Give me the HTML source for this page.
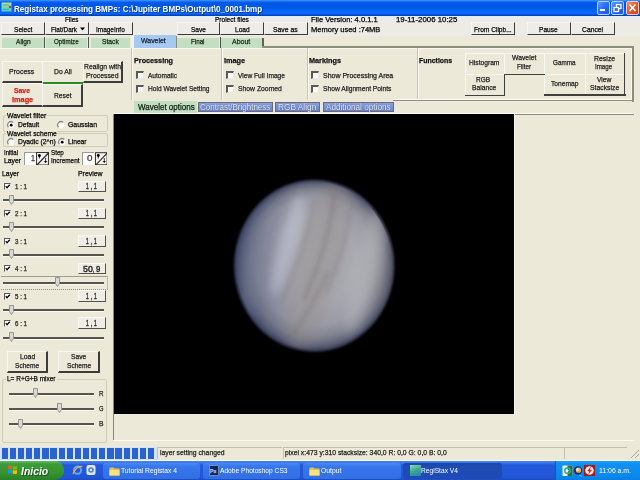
<!DOCTYPE html><html><head><meta charset="utf-8"><style>
html,body{margin:0;padding:0;width:640px;height:480px;overflow:hidden;background:#ECE9D8;font-family:"Liberation Sans", sans-serif;}
div{position:absolute;} body>svg{position:absolute;}
</style></head><body>
<div style="left:0px;top:0px;width:640px;height:16px;background:linear-gradient(#3a94ff 0px,#2a80ff 1px,#0a5ef0 2px,#0056e4 4px,#005ae8 8px,#0868fc 12px,#0a66f8 14px,#0044c8 15px,#0040b8 16px);"></div>
<svg style="position:absolute;left:1px;top:2px" width="11" height="10"><defs><linearGradient id="ig" x1="0" y1="0" x2="0" y2="1"><stop offset="0" stop-color="#a8e898"/><stop offset="1" stop-color="#48d0c8"/></linearGradient></defs><rect x="0.5" y="0.5" width="10" height="9" fill="url(#ig)"/><path d="M2 3 h6 M2 7.2 h6" stroke="#4a8a9a" stroke-width="1.1" opacity="0.7"/><circle cx="9" cy="5" r="1.2" fill="#d03050"/></svg>
<div style="left:13.50px;top:2.67px;height:12px;line-height:12px;font-size:9.6px;font-weight:bold;font-style:normal;color:#fff;white-space:nowrap;transform:scaleX(0.8420);transform-origin:0 0;;text-shadow:1px 1px 0 #0a3aa0;">Registax processing BMPs: C:\Jupiter BMPs\Output\0_0001.bmp</div>
<div style="left:597px;top:1px;width:13px;height:14px;box-sizing:border-box;border:1px solid #b8d0ff;border-radius:2px;background:linear-gradient(135deg,#5a9aff,#2a6af8 50%,#1a58e8);"></div>
<div style="left:611px;top:1px;width:13px;height:14px;box-sizing:border-box;border:1px solid #b8d0ff;border-radius:2px;background:linear-gradient(135deg,#5a9aff,#2a6af8 50%,#1a58e8);"></div>
<div style="left:626px;top:1px;width:13px;height:14px;box-sizing:border-box;border:1px solid #f0c8b8;border-radius:2px;background:linear-gradient(135deg,#f09070,#e05a30 50%,#d04820);"></div>
<div style="left:600px;top:9px;width:5px;height:2px;background:#fff;"></div>
<svg style="position:absolute;left:611px;top:1px" width="13" height="14"><rect x="5.5" y="3.5" width="4.5" height="4" fill="none" stroke="#fff" stroke-width="1.3"/><rect x="3" y="6.5" width="4.5" height="4" fill="#2a68f0" stroke="#fff" stroke-width="1.3"/></svg>
<svg style="position:absolute;left:626px;top:1px" width="13" height="14"><path d="M3.5 3.5 L9.5 10 M9.5 3.5 L3.5 10" stroke="#fff" stroke-width="1.7"/></svg>
<div style="left:0px;top:16px;width:640px;height:20px;background:#ECEBE6;"></div>
<div style="left:0px;top:16px;width:640px;height:1.5px;background:#e4ecf6;"></div>
<div style="left:64.70px;top:13.50px;height:12px;line-height:12px;font-size:7.8px;font-weight:normal;font-style:normal;color:#000;white-space:nowrap;transform:scaleX(0.8081);transform-origin:0 0;-webkit-text-stroke:0.25px #000;">Files</div>
<div style="left:215.00px;top:13.60px;height:12px;line-height:12px;font-size:7.8px;font-weight:normal;font-style:normal;color:#000;white-space:nowrap;transform:scaleX(0.8382);transform-origin:0 0;-webkit-text-stroke:0.25px #000;">Project files</div>
<div style="left:311.30px;top:13.70px;height:12px;line-height:12px;font-size:7.8px;font-weight:normal;font-style:normal;color:#000;white-space:nowrap;transform:scaleX(0.9673);transform-origin:0 0;-webkit-text-stroke:0.25px #000;">File Version: 4.0.1.1</div>
<div style="left:311.30px;top:23.60px;height:12px;line-height:12px;font-size:7.8px;font-weight:normal;font-style:normal;color:#000;white-space:nowrap;transform:scaleX(0.9645);transform-origin:0 0;-webkit-text-stroke:0.25px #000;">Memory used :74MB</div>
<div style="left:396.40px;top:13.70px;height:12px;line-height:12px;font-size:7.8px;font-weight:normal;font-style:normal;color:#000;white-space:nowrap;transform:scaleX(1.0050);transform-origin:0 0;-webkit-text-stroke:0.25px #000;">19-11-2006 10:25</div>
<div style="left:1px;top:22px;width:44px;height:13px;background:#EDECE8;box-sizing:border-box;border-top:1px solid #f4f4f0;border-left:1px solid #f4f4f0;border-right:1.6px solid #3c3c3c;border-bottom:1.6px solid #3c3c3c;"></div>
<div style="left:14.00px;top:23.50px;height:12px;line-height:12px;font-size:7.8px;font-weight:normal;font-style:normal;color:#000;white-space:nowrap;transform:scaleX(0.8439);transform-origin:0 0;-webkit-text-stroke:0.25px #000;">Select</div>
<div style="left:45px;top:22px;width:44px;height:13px;background:#EDECE8;box-sizing:border-box;border-top:1px solid #f4f4f0;border-left:1px solid #f4f4f0;border-right:1.6px solid #3c3c3c;border-bottom:1.6px solid #3c3c3c;"></div>
<div style="left:51.30px;top:23.50px;height:12px;line-height:12px;font-size:7.8px;font-weight:normal;font-style:normal;color:#000;white-space:nowrap;transform:scaleX(0.8242);transform-origin:0 0;-webkit-text-stroke:0.25px #000;">Flat/Dark</div>
<div style="left:89px;top:22px;width:44px;height:13px;background:#EDECE8;box-sizing:border-box;border-top:1px solid #f4f4f0;border-left:1px solid #f4f4f0;border-right:1.6px solid #3c3c3c;border-bottom:1.6px solid #3c3c3c;"></div>
<div style="left:96.25px;top:23.50px;height:12px;line-height:12px;font-size:7.8px;font-weight:normal;font-style:normal;color:#000;white-space:nowrap;transform:scaleX(0.8292);transform-origin:0 0;-webkit-text-stroke:0.25px #000;">ImageInfo</div>
<div style="left:177px;top:22px;width:43px;height:13px;background:#EDECE8;box-sizing:border-box;border-top:1px solid #f4f4f0;border-left:1px solid #f4f4f0;border-right:1.6px solid #3c3c3c;border-bottom:1.6px solid #3c3c3c;"></div>
<div style="left:191.20px;top:23.50px;height:12px;line-height:12px;font-size:7.8px;font-weight:normal;font-style:normal;color:#000;white-space:nowrap;transform:scaleX(0.8322);transform-origin:0 0;-webkit-text-stroke:0.25px #000;">Save</div>
<div style="left:220px;top:22px;width:44px;height:13px;background:#EDECE8;box-sizing:border-box;border-top:1px solid #f4f4f0;border-left:1px solid #f4f4f0;border-right:1.6px solid #3c3c3c;border-bottom:1.6px solid #3c3c3c;"></div>
<div style="left:234.80px;top:23.50px;height:12px;line-height:12px;font-size:7.8px;font-weight:normal;font-style:normal;color:#000;white-space:nowrap;transform:scaleX(0.8470);transform-origin:0 0;-webkit-text-stroke:0.25px #000;">Load</div>
<div style="left:264px;top:22px;width:44px;height:13px;background:#EDECE8;box-sizing:border-box;border-top:1px solid #f4f4f0;border-left:1px solid #f4f4f0;border-right:1.6px solid #3c3c3c;border-bottom:1.6px solid #3c3c3c;"></div>
<div style="left:273.30px;top:23.50px;height:12px;line-height:12px;font-size:7.8px;font-weight:normal;font-style:normal;color:#000;white-space:nowrap;transform:scaleX(0.8724);transform-origin:0 0;-webkit-text-stroke:0.25px #000;">Save as</div>
<div style="left:471px;top:22px;width:43.5px;height:13px;background:#EDECE8;box-sizing:border-box;border-top:1px solid #f4f4f0;border-left:1px solid #f4f4f0;border-right:1.6px solid #3c3c3c;border-bottom:1.6px solid #3c3c3c;"></div>
<div style="left:473.70px;top:23.50px;height:12px;line-height:12px;font-size:7.8px;font-weight:normal;font-style:normal;color:#000;white-space:nowrap;transform:scaleX(0.8443);transform-origin:0 0;-webkit-text-stroke:0.25px #000;">From Clipb...</div>
<div style="left:527px;top:22px;width:43.5px;height:13px;background:#EDECE8;box-sizing:border-box;border-top:1px solid #f4f4f0;border-left:1px solid #f4f4f0;border-right:1.6px solid #3c3c3c;border-bottom:1.6px solid #3c3c3c;"></div>
<div style="left:538.70px;top:23.50px;height:12px;line-height:12px;font-size:7.8px;font-weight:normal;font-style:normal;color:#000;white-space:nowrap;transform:scaleX(0.8457);transform-origin:0 0;-webkit-text-stroke:0.25px #000;">Pause</div>
<div style="left:570.5px;top:22px;width:44.0px;height:13px;background:#EDECE8;box-sizing:border-box;border-top:1px solid #f4f4f0;border-left:1px solid #f4f4f0;border-right:1.6px solid #3c3c3c;border-bottom:1.6px solid #3c3c3c;"></div>
<div style="left:582.00px;top:23.50px;height:12px;line-height:12px;font-size:7.8px;font-weight:normal;font-style:normal;color:#000;white-space:nowrap;transform:scaleX(0.8684);transform-origin:0 0;-webkit-text-stroke:0.25px #000;">Cancel</div>
<svg style="position:absolute;left:80px;top:27px" width="5" height="4"><path d="M0 0.5 H5 L2.5 3.5 Z" fill="#000"/></svg>
<div style="left:2px;top:37.5px;width:41.5px;height:10px;background:#C3DFC3;"></div>
<div style="left:15.50px;top:35.80px;height:12px;line-height:12px;font-size:7.8px;font-weight:normal;font-style:normal;color:#102010;white-space:nowrap;transform:scaleX(0.8470);transform-origin:0 0;-webkit-text-stroke:0.25px #102010;">Align</div>
<div style="left:46px;top:37.5px;width:40.5px;height:10px;background:#C3DFC3;"></div>
<div style="left:54.10px;top:35.80px;height:12px;line-height:12px;font-size:7.8px;font-weight:normal;font-style:normal;color:#102010;white-space:nowrap;transform:scaleX(0.8027);transform-origin:0 0;-webkit-text-stroke:0.25px #102010;">Optimize</div>
<div style="left:90.5px;top:37.5px;width:39.5px;height:10px;background:#C3DFC3;"></div>
<div style="left:101.80px;top:35.80px;height:12px;line-height:12px;font-size:7.8px;font-weight:normal;font-style:normal;color:#102010;white-space:nowrap;transform:scaleX(0.8649);transform-origin:0 0;-webkit-text-stroke:0.25px #102010;">Stack</div>
<div style="left:177px;top:37.5px;width:41.5px;height:10px;background:#C3DFC3;"></div>
<div style="left:191.00px;top:35.80px;height:12px;line-height:12px;font-size:7.8px;font-weight:normal;font-style:normal;color:#102010;white-space:nowrap;transform:scaleX(0.7976);transform-origin:0 0;-webkit-text-stroke:0.25px #102010;">Final</div>
<div style="left:221px;top:37.5px;width:41px;height:10px;background:#C3DFC3;"></div>
<div style="left:231.90px;top:35.80px;height:12px;line-height:12px;font-size:7.8px;font-weight:normal;font-style:normal;color:#102010;white-space:nowrap;transform:scaleX(0.8972);transform-origin:0 0;-webkit-text-stroke:0.25px #102010;">About</div>
<div style="left:134px;top:35px;width:42px;height:12.5px;background:#A6C9F2;"></div>
<div style="left:141.20px;top:34.60px;height:12px;line-height:12px;font-size:7.8px;font-weight:normal;font-style:normal;color:#102030;white-space:nowrap;transform:scaleX(0.8894);transform-origin:0 0;-webkit-text-stroke:0.25px #102030;">Wavelet</div>
<div style="left:44px;top:37px;width:1.2px;height:11px;background:#505050;"></div>
<div style="left:87.5px;top:37px;width:1.2px;height:11px;background:#505050;"></div>
<div style="left:219.5px;top:37px;width:1.2px;height:11px;background:#505050;"></div>
<div style="left:176px;top:36px;width:1px;height:12px;background:#8a8a80;"></div>
<div style="left:130.5px;top:36px;width:3px;height:12px;background:#f2f2ea;"></div>
<div style="left:262px;top:37.5px;width:1.5px;height:10px;background:#606060;"></div>
<div style="left:262px;top:46.2px;width:371.5px;height:1.4px;background:#908e80;"></div>
<div style="left:0px;top:47.5px;width:633px;height:1px;background:#f8f7f0;"></div>
<div style="left:131px;top:48px;width:1px;height:52px;background:#c8c4b0;"></div>
<div style="left:132px;top:48px;width:1px;height:52px;background:#faf9f2;"></div>
<div style="left:220.5px;top:48px;width:1px;height:52px;background:#c8c4b0;"></div>
<div style="left:221.5px;top:48px;width:1px;height:52px;background:#faf9f2;"></div>
<div style="left:307px;top:48px;width:1px;height:52px;background:#c8c4b0;"></div>
<div style="left:308px;top:48px;width:1px;height:52px;background:#faf9f2;"></div>
<div style="left:417px;top:48px;width:1px;height:52px;background:#c8c4b0;"></div>
<div style="left:418px;top:48px;width:1px;height:52px;background:#faf9f2;"></div>
<div style="left:393px;top:100.3px;width:240.5px;height:1.2px;background:#908e80;"></div>
<div style="left:393px;top:98.8px;width:239px;height:1.2px;background:#fbfaf4;"></div>
<div style="left:632.4px;top:47px;width:1.3px;height:54.5px;background:#908e80;"></div>
<div style="left:631.2px;top:49px;width:1.2px;height:50px;background:#fbfaf4;"></div>
<div style="left:133.90px;top:55.07px;height:12px;line-height:12px;font-size:7.6px;font-weight:bold;font-style:normal;color:#111;white-space:nowrap;transform:scaleX(0.9521);transform-origin:0 0;-webkit-text-stroke:0.25px #111;">Processing</div>
<div style="left:223.90px;top:55.07px;height:12px;line-height:12px;font-size:7.6px;font-weight:bold;font-style:normal;color:#111;white-space:nowrap;transform:scaleX(0.9607);transform-origin:0 0;-webkit-text-stroke:0.25px #111;">Image</div>
<div style="left:308.90px;top:55.07px;height:12px;line-height:12px;font-size:7.6px;font-weight:bold;font-style:normal;color:#111;white-space:nowrap;transform:scaleX(0.9591);transform-origin:0 0;-webkit-text-stroke:0.25px #111;">Markings</div>
<div style="left:419.00px;top:55.12px;height:12px;line-height:12px;font-size:7.6px;font-weight:bold;font-style:normal;color:#111;white-space:nowrap;transform:scaleX(0.9139);transform-origin:0 0;-webkit-text-stroke:0.25px #111;">Functions</div>
<div style="left:136.3px;top:71.0px;width:8px;height:8px;box-sizing:border-box;background:#fbfbf8;border-top:2px solid #5a5a5a;border-left:2px solid #5a5a5a;border-right:1px solid #e8e8e0;border-bottom:1px solid #e8e8e0;"></div>
<div style="left:148.00px;top:69.50px;height:12px;line-height:12px;font-size:7.8px;font-weight:normal;font-style:normal;color:#1a1a1a;white-space:nowrap;transform:scaleX(0.8393);transform-origin:0 0;-webkit-text-stroke:0.25px #1a1a1a;">Automatic</div>
<div style="left:136.3px;top:84.6px;width:8px;height:8px;box-sizing:border-box;background:#fbfbf8;border-top:2px solid #5a5a5a;border-left:2px solid #5a5a5a;border-right:1px solid #e8e8e0;border-bottom:1px solid #e8e8e0;"></div>
<div style="left:148.00px;top:83.10px;height:12px;line-height:12px;font-size:7.8px;font-weight:normal;font-style:normal;color:#1a1a1a;white-space:nowrap;transform:scaleX(0.8478);transform-origin:0 0;-webkit-text-stroke:0.25px #1a1a1a;">Hold Wavelet Setting</div>
<div style="left:226.3px;top:71.0px;width:8px;height:8px;box-sizing:border-box;background:#fbfbf8;border-top:2px solid #5a5a5a;border-left:2px solid #5a5a5a;border-right:1px solid #e8e8e0;border-bottom:1px solid #e8e8e0;"></div>
<div style="left:238.00px;top:69.50px;height:12px;line-height:12px;font-size:7.8px;font-weight:normal;font-style:normal;color:#1a1a1a;white-space:nowrap;transform:scaleX(0.8493);transform-origin:0 0;-webkit-text-stroke:0.25px #1a1a1a;">View Full Image</div>
<div style="left:226.3px;top:84.6px;width:8px;height:8px;box-sizing:border-box;background:#fbfbf8;border-top:2px solid #5a5a5a;border-left:2px solid #5a5a5a;border-right:1px solid #e8e8e0;border-bottom:1px solid #e8e8e0;"></div>
<div style="left:238.00px;top:83.10px;height:12px;line-height:12px;font-size:7.8px;font-weight:normal;font-style:normal;color:#1a1a1a;white-space:nowrap;transform:scaleX(0.8726);transform-origin:0 0;-webkit-text-stroke:0.25px #1a1a1a;">Show Zoomed</div>
<div style="left:311.3px;top:71.0px;width:8px;height:8px;box-sizing:border-box;background:#fbfbf8;border-top:2px solid #5a5a5a;border-left:2px solid #5a5a5a;border-right:1px solid #e8e8e0;border-bottom:1px solid #e8e8e0;"></div>
<div style="left:323.00px;top:69.50px;height:12px;line-height:12px;font-size:7.8px;font-weight:normal;font-style:normal;color:#1a1a1a;white-space:nowrap;transform:scaleX(0.8955);transform-origin:0 0;-webkit-text-stroke:0.25px #1a1a1a;">Show Processing Area</div>
<div style="left:311.3px;top:84.6px;width:8px;height:8px;box-sizing:border-box;background:#fbfbf8;border-top:2px solid #5a5a5a;border-left:2px solid #5a5a5a;border-right:1px solid #e8e8e0;border-bottom:1px solid #e8e8e0;"></div>
<div style="left:323.00px;top:83.10px;height:12px;line-height:12px;font-size:7.8px;font-weight:normal;font-style:normal;color:#1a1a1a;white-space:nowrap;transform:scaleX(0.8585);transform-origin:0 0;-webkit-text-stroke:0.25px #1a1a1a;">Show Alignment Points</div>
<div style="left:464.5px;top:53px;width:161px;height:43px;background:#ECE9D8;"></div>
<div style="left:505px;top:75px;width:39px;height:21px;background:#ECE9D8;"></div>
<div style="left:464.5px;top:53px;width:160px;height:1px;background:#f8f8f2;"></div>
<div style="left:464.5px;top:53px;width:1px;height:43px;background:#f8f8f2;"></div>
<div style="left:504px;top:53px;width:1px;height:21px;background:#f8f8f2;"></div>
<div style="left:544px;top:53px;width:1px;height:43px;background:#f8f8f2;"></div>
<div style="left:585px;top:53px;width:1px;height:43px;background:#f8f8f2;"></div>
<div style="left:464.5px;top:73.5px;width:40px;height:1px;background:#f8f8f2;"></div>
<div style="left:544px;top:73.5px;width:80px;height:1px;background:#f8f8f2;"></div>
<div style="left:504px;top:73.5px;width:40.5px;height:1.6px;background:#404040;"></div>
<div style="left:503.5px;top:73.5px;width:1.6px;height:22.7px;background:#404040;"></div>
<div style="left:464.5px;top:94.6px;width:40.6px;height:1.6px;background:#404040;"></div>
<div style="left:544px;top:94.2px;width:81.5px;height:1.6px;background:#404040;"></div>
<div style="left:623.9px;top:53px;width:1.6px;height:42.8px;background:#404040;"></div>
<div style="left:468.60px;top:56.90px;height:12px;line-height:12px;font-size:7.8px;font-weight:normal;font-style:normal;color:#1a1a1a;white-space:nowrap;transform:scaleX(0.8556);transform-origin:0 0;-webkit-text-stroke:0.25px #1a1a1a;">Histogram</div>
<div style="left:511.90px;top:52.30px;height:12px;line-height:12px;font-size:7.8px;font-weight:normal;font-style:normal;color:#1a1a1a;white-space:nowrap;transform:scaleX(0.8732);transform-origin:0 0;-webkit-text-stroke:0.25px #1a1a1a;">Wavelet</div>
<div style="left:516.90px;top:61.05px;height:12px;line-height:12px;font-size:7.8px;font-weight:normal;font-style:normal;color:#1a1a1a;white-space:nowrap;transform:scaleX(0.8143);transform-origin:0 0;-webkit-text-stroke:0.25px #1a1a1a;">Filter</div>
<div style="left:552.50px;top:56.55px;height:12px;line-height:12px;font-size:7.8px;font-weight:normal;font-style:normal;color:#1a1a1a;white-space:nowrap;transform:scaleX(0.8103);transform-origin:0 0;-webkit-text-stroke:0.25px #1a1a1a;">Gamma</div>
<div style="left:593.50px;top:52.50px;height:12px;line-height:12px;font-size:7.8px;font-weight:normal;font-style:normal;color:#1a1a1a;white-space:nowrap;transform:scaleX(0.8897);transform-origin:0 0;-webkit-text-stroke:0.25px #1a1a1a;">Resize</div>
<div style="left:595.20px;top:61.10px;height:12px;line-height:12px;font-size:7.8px;font-weight:normal;font-style:normal;color:#1a1a1a;white-space:nowrap;transform:scaleX(0.7932);transform-origin:0 0;-webkit-text-stroke:0.25px #1a1a1a;">Image</div>
<div style="left:476.40px;top:73.80px;height:12px;line-height:12px;font-size:7.8px;font-weight:normal;font-style:normal;color:#1a1a1a;white-space:nowrap;transform:scaleX(0.8350);transform-origin:0 0;-webkit-text-stroke:0.25px #1a1a1a;">RGB</div>
<div style="left:471.70px;top:82.30px;height:12px;line-height:12px;font-size:7.8px;font-weight:normal;font-style:normal;color:#1a1a1a;white-space:nowrap;transform:scaleX(0.8618);transform-origin:0 0;-webkit-text-stroke:0.25px #1a1a1a;">Balance</div>
<div style="left:550.60px;top:78.20px;height:12px;line-height:12px;font-size:7.8px;font-weight:normal;font-style:normal;color:#1a1a1a;white-space:nowrap;transform:scaleX(0.8537);transform-origin:0 0;-webkit-text-stroke:0.25px #1a1a1a;">Tonemap</div>
<div style="left:596.90px;top:73.70px;height:12px;line-height:12px;font-size:7.8px;font-weight:normal;font-style:normal;color:#1a1a1a;white-space:nowrap;transform:scaleX(0.8527);transform-origin:0 0;-webkit-text-stroke:0.25px #1a1a1a;">View</div>
<div style="left:589.50px;top:82.30px;height:12px;line-height:12px;font-size:7.8px;font-weight:normal;font-style:normal;color:#1a1a1a;white-space:nowrap;transform:scaleX(0.8747);transform-origin:0 0;-webkit-text-stroke:0.25px #1a1a1a;">Stacksize</div>
<div style="left:2px;top:61px;width:40.5px;height:22px;background:#ECE9D8;box-sizing:border-box;border-top:1px solid #f8f8f2;border-left:1px solid #f8f8f2;border-right:0px solid #3c3c3c;border-bottom:2px solid #3c3c3c;"></div>
<div style="left:9.40px;top:65.70px;height:12px;line-height:12px;font-size:7.8px;font-weight:normal;font-style:normal;color:#1a1a1a;white-space:nowrap;transform:scaleX(0.8985);transform-origin:0 0;-webkit-text-stroke:0.25px #1a1a1a;">Process</div>
<div style="left:42px;top:61px;width:41px;height:22.5px;background:#ECE9D8;box-sizing:border-box;border-top:1px solid #f8f8f2;border-left:1px solid #f8f8f2;border-right:0px solid #2a8a2a;border-bottom:2.5px solid #2a8a2a;"></div>
<div style="left:53.50px;top:65.70px;height:12px;line-height:12px;font-size:7.8px;font-weight:normal;font-style:normal;color:#1a1a1a;white-space:nowrap;transform:scaleX(0.8743);transform-origin:0 0;-webkit-text-stroke:0.25px #1a1a1a;">Do All</div>
<div style="left:82.5px;top:61px;width:40.5px;height:22px;background:#ECE9D8;box-sizing:border-box;border-top:1px solid #f8f8f2;border-left:1px solid #f8f8f2;border-right:2px solid #3c3c3c;border-bottom:2px solid #3c3c3c;"></div>
<div style="left:84.00px;top:61.30px;height:12px;line-height:12px;font-size:7.8px;font-weight:normal;font-style:normal;color:#1a1a1a;white-space:nowrap;transform:scaleX(0.8712);transform-origin:0 0;-webkit-text-stroke:0.25px #1a1a1a;">Realign with</div>
<div style="left:86.00px;top:69.80px;height:12px;line-height:12px;font-size:7.8px;font-weight:normal;font-style:normal;color:#1a1a1a;white-space:nowrap;transform:scaleX(0.8818);transform-origin:0 0;-webkit-text-stroke:0.25px #1a1a1a;">Processed</div>
<div style="left:2px;top:83px;width:40.5px;height:23.799999999999997px;background:#ECE9D8;box-sizing:border-box;border-top:1px solid #f8f8f2;border-left:1px solid #f8f8f2;border-right:0px solid #3c3c3c;border-bottom:2px solid #3c3c3c;"></div>
<div style="left:14.00px;top:85.37px;height:12px;line-height:12px;font-size:7.6px;font-weight:bold;font-style:normal;color:#e01818;white-space:nowrap;transform:scaleX(0.9016);transform-origin:0 0;-webkit-text-stroke:0.25px #e01818;">Save</div>
<div style="left:11.60px;top:94.17px;height:12px;line-height:12px;font-size:7.6px;font-weight:bold;font-style:normal;color:#e01818;white-space:nowrap;transform:scaleX(0.9652);transform-origin:0 0;-webkit-text-stroke:0.25px #e01818;">Image</div>
<div style="left:42px;top:83.5px;width:41px;height:23.299999999999997px;background:#ECE9D8;box-sizing:border-box;border-top:1px solid #f8f8f2;border-left:1px solid #f8f8f2;border-right:2px solid #3c3c3c;border-bottom:2px solid #3c3c3c;"></div>
<div style="left:53.50px;top:89.50px;height:12px;line-height:12px;font-size:7.8px;font-weight:normal;font-style:normal;color:#1a1a1a;white-space:nowrap;transform:scaleX(0.8596);transform-origin:0 0;-webkit-text-stroke:0.25px #1a1a1a;">Reset</div>
<div style="left:134px;top:101px;width:63px;height:12.5px;background:#C4E0C4;"></div>
<div style="left:137.70px;top:101.15px;height:12px;line-height:12px;font-size:8.8px;font-weight:normal;font-style:normal;color:#101810;white-space:nowrap;transform:scaleX(0.9101);transform-origin:0 0;-webkit-text-stroke:0.25px #101810;">Wavelet options</div>
<div style="left:198px;top:101.8px;width:74.5px;height:10.5px;box-sizing:border-box;border:1px solid #6a6a70;background:linear-gradient(#8aa0e0,#6a84d0);"></div>
<div style="left:200.20px;top:100.95px;height:12px;line-height:12px;font-size:8.8px;font-weight:normal;font-style:normal;color:#eef2fa;white-space:nowrap;transform:scaleX(0.9099);transform-origin:0 0;;text-shadow:0 0 1px #203070;">Contrast/Brightness</div>
<div style="left:274.5px;top:101.8px;width:45.5px;height:10.5px;box-sizing:border-box;border:1px solid #6a6a70;background:linear-gradient(#8aa0e0,#6a84d0);"></div>
<div style="left:277.50px;top:100.95px;height:12px;line-height:12px;font-size:8.8px;font-weight:normal;font-style:normal;color:#eef2fa;white-space:nowrap;transform:scaleX(0.9431);transform-origin:0 0;;text-shadow:0 0 1px #203070;">RGB Align</div>
<div style="left:323px;top:101.8px;width:70.5px;height:10.5px;box-sizing:border-box;border:1px solid #6a6a70;background:linear-gradient(#8aa0e0,#6a84d0);"></div>
<div style="left:325.60px;top:100.95px;height:12px;line-height:12px;font-size:8.8px;font-weight:normal;font-style:normal;color:#eef2fa;white-space:nowrap;transform:scaleX(0.9298);transform-origin:0 0;;text-shadow:0 0 1px #203070;">Additional options</div>
<div style="left:113px;top:112.8px;width:520px;height:1.2px;background:#fbfaf4;"></div>
<div style="left:514px;top:114px;width:119.5px;height:1px;background:#8a887a;"></div>
<div style="left:113px;top:114px;width:401px;height:300px;background:#000;"></div>
<svg style="position:absolute;left:113px;top:114px" width="401" height="300" viewBox="113 114 401 300">
<defs>
<radialGradient id="pg" cx="314.25" cy="265.75" fx="316" fy="250" r="86.25" gradientUnits="userSpaceOnUse" gradientTransform="translate(314.25 265.75) scale(0.9304 1) translate(-314.25 -265.75)">
<stop offset="0" stop-color="#acacb2"/>
<stop offset="0.5" stop-color="#a8a8b0"/>
<stop offset="0.74" stop-color="#9a9ba6"/>
<stop offset="0.86" stop-color="#80828f"/>
<stop offset="0.94" stop-color="#5e6278"/>
<stop offset="0.985" stop-color="#3a3e56"/>
<stop offset="1" stop-color="#202434"/>
</radialGradient>
<linearGradient id="side" x1="0" y1="0" x2="1" y2="0">
<stop offset="0" stop-color="#34406a" stop-opacity="0.5"/>
<stop offset="0.4" stop-color="#34406a" stop-opacity="0"/>
<stop offset="0.75" stop-color="#706a60" stop-opacity="0"/>
<stop offset="1" stop-color="#706a60" stop-opacity="0.2"/>
</linearGradient>
<filter id="bl" x="-50%" y="-50%" width="200%" height="200%"><feGaussianBlur stdDeviation="6"/></filter>
<filter id="bl4" x="-50%" y="-50%" width="200%" height="200%"><feGaussianBlur stdDeviation="4.5"/></filter>
<filter id="bl3" x="-50%" y="-50%" width="200%" height="200%"><feGaussianBlur stdDeviation="2.2"/></filter>
<filter id="bl2" x="-20%" y="-20%" width="140%" height="140%"><feGaussianBlur stdDeviation="1.3"/></filter>
<clipPath id="pc"><ellipse cx="314.25" cy="265.75" rx="78" ry="84"/></clipPath>
</defs>
<g filter="url(#bl2)">
<ellipse cx="314.25" cy="265.75" rx="80.25" ry="86.25" fill="url(#pg)"/>
<ellipse cx="314.25" cy="265.75" rx="80.25" ry="86.25" fill="url(#side)"/>
</g>
<g clip-path="url(#pc)">
<g filter="url(#bl)">
<ellipse cx="318" cy="262" rx="22" ry="92" fill="#8c8682" opacity="0.36" transform="rotate(15 318 262)"/>
<ellipse cx="254" cy="272" rx="12" ry="70" fill="#80849c" opacity="0.25" transform="rotate(15 254 272)"/>
<ellipse cx="368" cy="262" rx="12" ry="75" fill="#bcbcc0" opacity="0.5" transform="rotate(15 368 262)"/>
</g>
<g filter="url(#bl4)">
<ellipse cx="287" cy="246" rx="8" ry="52" fill="#c6cade" opacity="0.5" transform="rotate(16 287 246)"/>
</g>
<g filter="url(#bl3)" opacity="0.3">
<path d="M334 192 C332 225 322 258 304 300" stroke="#665e5e" stroke-width="3.5" fill="none"/>
<path d="M314 200 C310 232 298 262 282 300" stroke="#7a7272" stroke-width="3" fill="none"/>
<path d="M352 200 C348 232 340 262 326 292" stroke="#7a7474" stroke-width="3" fill="none"/>
<path d="M328 272 C318 295 304 318 290 340" stroke="#766c6c" stroke-width="4" fill="none"/>
<path d="M262 220 C258 245 252 270 246 300" stroke="#707488" stroke-width="3" fill="none"/>
</g>
</g>
</svg>
<div style="left:112.5px;top:114px;width:1px;height:326px;background:#8a8778;"></div>
<div style="left:113px;top:440px;width:521px;height:1.2px;background:#fbfaf4;"></div>
<div style="left:514px;top:114px;width:1px;height:300.5px;background:#fbfaf4;"></div>
<div style="left:2.5px;top:115px;width:105.5px;height:17px;box-sizing:border-box;border:1px solid #d0ccb8;border-radius:2px;"></div>
<div style="left:6px;top:112px;width:41px;height:6px;background:#ECE9D8;"></div>
<div style="left:6.70px;top:109.70px;height:12px;line-height:12px;font-size:7.8px;font-weight:normal;font-style:normal;color:#000;white-space:nowrap;transform:scaleX(0.8778);transform-origin:0 0;-webkit-text-stroke:0.25px #000;">Wavelet filter</div>
<svg style="position:absolute;left:6.199999999999999px;top:119.6px" width="10" height="10"><circle cx="5" cy="5" r="3.4" fill="#fafaf6"/><path d="M 2.45 7.24 A 3.4 3.4 0 0 1 7.24 2.45" stroke="#8a8a8a" stroke-width="1.3" fill="none"/><circle cx="5.2" cy="5.2" r="1.4" fill="#000"/></svg>
<div style="left:18.20px;top:118.80px;height:12px;line-height:12px;font-size:7.8px;font-weight:normal;font-style:normal;color:#000;white-space:nowrap;transform:scaleX(0.8534);transform-origin:0 0;-webkit-text-stroke:0.25px #000;">Default</div>
<svg style="position:absolute;left:56.2px;top:119.6px" width="10" height="10"><circle cx="5" cy="5" r="3.4" fill="#fafaf6"/><path d="M 2.45 7.24 A 3.4 3.4 0 0 1 7.24 2.45" stroke="#8a8a8a" stroke-width="1.3" fill="none"/></svg>
<div style="left:68.00px;top:119.05px;height:12px;line-height:12px;font-size:7.8px;font-weight:normal;font-style:normal;color:#000;white-space:nowrap;transform:scaleX(0.8800);transform-origin:0 0;-webkit-text-stroke:0.25px #000;">Gaussian</div>
<div style="left:2.5px;top:133.2px;width:105.5px;height:14px;box-sizing:border-box;border:1px solid #d0ccb8;border-radius:2px;"></div>
<div style="left:6px;top:131px;width:51px;height:4px;background:#ECE9D8;"></div>
<div style="left:6.70px;top:127.90px;height:12px;line-height:12px;font-size:7.8px;font-weight:normal;font-style:normal;color:#000;white-space:nowrap;transform:scaleX(0.8698);transform-origin:0 0;-webkit-text-stroke:0.25px #000;">Wavelet scheme</div>
<svg style="position:absolute;left:6.199999999999999px;top:137.3px" width="10" height="10"><circle cx="5" cy="5" r="3.4" fill="#fafaf6"/><path d="M 2.45 7.24 A 3.4 3.4 0 0 1 7.24 2.45" stroke="#8a8a8a" stroke-width="1.3" fill="none"/></svg>
<div style="left:18.20px;top:136.00px;height:12px;line-height:12px;font-size:7.8px;font-weight:normal;font-style:normal;color:#000;white-space:nowrap;transform:scaleX(0.8685);transform-origin:0 0;-webkit-text-stroke:0.25px #000;">Dyadic (2^n)</div>
<svg style="position:absolute;left:56.5px;top:137.3px" width="10" height="10"><circle cx="5" cy="5" r="3.4" fill="#fafaf6"/><path d="M 2.45 7.24 A 3.4 3.4 0 0 1 7.24 2.45" stroke="#8a8a8a" stroke-width="1.3" fill="none"/><circle cx="5.2" cy="5.2" r="1.4" fill="#000"/></svg>
<div style="left:67.50px;top:135.90px;height:12px;line-height:12px;font-size:7.8px;font-weight:normal;font-style:normal;color:#000;white-space:nowrap;transform:scaleX(0.8532);transform-origin:0 0;-webkit-text-stroke:0.25px #000;">Linear</div>
<div style="left:3.50px;top:146.50px;height:12px;line-height:12px;font-size:7.8px;font-weight:normal;font-style:normal;color:#000;white-space:nowrap;transform:scaleX(0.7687);transform-origin:0 0;-webkit-text-stroke:0.25px #000;">Initial</div>
<div style="left:3.50px;top:155.20px;height:12px;line-height:12px;font-size:7.8px;font-weight:normal;font-style:normal;color:#000;white-space:nowrap;transform:scaleX(0.8769);transform-origin:0 0;-webkit-text-stroke:0.25px #000;">Layer</div>
<div style="left:51.10px;top:146.80px;height:12px;line-height:12px;font-size:7.8px;font-weight:normal;font-style:normal;color:#000;white-space:nowrap;transform:scaleX(0.7986);transform-origin:0 0;-webkit-text-stroke:0.25px #000;">Step</div>
<div style="left:51.10px;top:155.20px;height:12px;line-height:12px;font-size:7.8px;font-weight:normal;font-style:normal;color:#000;white-space:nowrap;transform:scaleX(0.8220);transform-origin:0 0;-webkit-text-stroke:0.25px #000;">Increment</div>
<div style="left:23.6px;top:151.6px;width:12.399999999999999px;height:13.5px;box-sizing:border-box;background:#fff;border-top:1px solid #9a9a9a;border-left:1px solid #9a9a9a;"></div>
<div style="left:31.00px;top:152.24px;height:12px;line-height:12px;font-size:9.4px;font-weight:normal;font-style:normal;color:#333;white-space:nowrap;transform:scaleX(0.7667);transform-origin:0 0;-webkit-text-stroke:0.25px #333;">1</div>
<svg style="position:absolute;left:36px;top:151.6px" width="13" height="13.5" viewBox="0 0 13 13.5"><rect x="0.5" y="0.5" width="12" height="12.5" fill="#f4f3ee" stroke="#3a3a3a" stroke-width="1.1"/><path d="M1 13 L12.5 1" stroke="#202020" stroke-width="1.1"/><circle cx="3.4" cy="3.4" r="1.5" fill="#000"/><path d="M3.4 3.5 v3" stroke="#000" stroke-width="0.8"/><path d="M8 9 h3.2 l-1.6 2.2 z" fill="#000"/><path d="M9.6 6 v3" stroke="#000" stroke-width="0.8"/></svg>
<div style="left:82.3px;top:151.6px;width:12.200000000000003px;height:13.5px;box-sizing:border-box;background:#fff;border-top:1px solid #9a9a9a;border-left:1px solid #9a9a9a;"></div>
<div style="left:86.50px;top:152.24px;height:12px;line-height:12px;font-size:9.4px;font-weight:normal;font-style:normal;color:#333;white-space:nowrap;transform:scaleX(1.0542);transform-origin:0 0;-webkit-text-stroke:0.25px #333;">0</div>
<svg style="position:absolute;left:94.5px;top:151.6px" width="12.599999999999994" height="13.5" viewBox="0 0 13 13.5"><rect x="0.5" y="0.5" width="12" height="12.5" fill="#f4f3ee" stroke="#3a3a3a" stroke-width="1.1"/><path d="M1 13 L12.5 1" stroke="#202020" stroke-width="1.1"/><circle cx="3.4" cy="3.4" r="1.5" fill="#000"/><path d="M3.4 3.5 v3" stroke="#000" stroke-width="0.8"/><path d="M8 9 h3.2 l-1.6 2.2 z" fill="#000"/><path d="M9.6 6 v3" stroke="#000" stroke-width="0.8"/></svg>
<div style="left:2.10px;top:167.80px;height:12px;line-height:12px;font-size:7.8px;font-weight:normal;font-style:normal;color:#000;white-space:nowrap;transform:scaleX(0.8795);transform-origin:0 0;-webkit-text-stroke:0.25px #000;">Layer</div>
<div style="left:77.90px;top:167.80px;height:12px;line-height:12px;font-size:7.8px;font-weight:normal;font-style:normal;color:#000;white-space:nowrap;transform:scaleX(0.8823);transform-origin:0 0;-webkit-text-stroke:0.25px #000;">Preview</div>
<div style="left:4.2px;top:183.2px;width:7px;height:7px;box-sizing:border-box;background:#fbfbf8;border-top:1.6px solid #5a5a5a;border-left:1.6px solid #5a5a5a;border-right:1px solid #e8e8e0;border-bottom:1px solid #e8e8e0;"></div>
<svg style="position:absolute;left:4.2px;top:183.2px" width="7" height="7" viewBox="0 0 8 8"><path d="M2 3.6 L3.5 5.4 L6.6 2" stroke="#000" stroke-width="1.4" fill="none"/></svg>
<div style="left:15.00px;top:181.00px;height:12px;line-height:12px;font-size:7.8px;font-weight:normal;font-style:normal;color:#1a1a1a;white-space:nowrap;transform:scaleX(0.7910);transform-origin:0 0;-webkit-text-stroke:0.25px #1a1a1a;">1 : 1</div>
<div style="left:77.5px;top:180.5px;width:28.299999999999997px;height:11.599999999999994px;background:#EEEDE6;box-sizing:border-box;border-top:1px solid #f8f8f4;border-left:1px solid #f8f8f4;border-right:1.4px solid #505050;border-bottom:1.4px solid #505050;"></div>
<div style="left:86.30px;top:180.17px;height:12px;line-height:12px;font-size:9.6px;font-weight:normal;font-style:normal;color:#2a2a2a;white-space:nowrap;transform:scaleX(0.5068);transform-origin:0 0;-webkit-text-stroke:0.25px #2a2a2a;-webkit-text-stroke:0.45px #2a2a2a;">1</div>
<div style="left:90.80px;top:180.17px;height:12px;line-height:12px;font-size:9.6px;font-weight:normal;font-style:normal;color:#2a2a2a;white-space:nowrap;transform:scaleX(0.5208);transform-origin:0 0;-webkit-text-stroke:0.25px #2a2a2a;-webkit-text-stroke:0.45px #2a2a2a;">,</div>
<div style="left:93.80px;top:180.17px;height:12px;line-height:12px;font-size:9.6px;font-weight:normal;font-style:normal;color:#2a2a2a;white-space:nowrap;transform:scaleX(0.5068);transform-origin:0 0;-webkit-text-stroke:0.25px #2a2a2a;-webkit-text-stroke:0.45px #2a2a2a;">1</div>
<div style="left:3px;top:199px;width:101px;height:2px;background:#56544c;"></div>
<div style="left:3px;top:201px;width:101px;height:1px;background:#faf9f2;"></div>
<svg style="position:absolute;left:9.0px;top:194.5px" width="5" height="10" viewBox="0 0 5 10"><path d="M0.5 0.5 H4.5 V6.5 L2.5 9.5 L0.5 6.5 Z" fill="#d8d8d4" stroke="#8c8c88" stroke-width="0.9"/></svg>
<div style="left:4.2px;top:210.2px;width:7px;height:7px;box-sizing:border-box;background:#fbfbf8;border-top:1.6px solid #5a5a5a;border-left:1.6px solid #5a5a5a;border-right:1px solid #e8e8e0;border-bottom:1px solid #e8e8e0;"></div>
<svg style="position:absolute;left:4.2px;top:210.2px" width="7" height="7" viewBox="0 0 8 8"><path d="M2 3.6 L3.5 5.4 L6.6 2" stroke="#000" stroke-width="1.4" fill="none"/></svg>
<div style="left:15.00px;top:208.00px;height:12px;line-height:12px;font-size:7.8px;font-weight:normal;font-style:normal;color:#1a1a1a;white-space:nowrap;transform:scaleX(0.7910);transform-origin:0 0;-webkit-text-stroke:0.25px #1a1a1a;">2 : 1</div>
<div style="left:77.5px;top:207.5px;width:28.299999999999997px;height:11.599999999999994px;background:#EEEDE6;box-sizing:border-box;border-top:1px solid #f8f8f4;border-left:1px solid #f8f8f4;border-right:1.4px solid #505050;border-bottom:1.4px solid #505050;"></div>
<div style="left:86.30px;top:207.17px;height:12px;line-height:12px;font-size:9.6px;font-weight:normal;font-style:normal;color:#2a2a2a;white-space:nowrap;transform:scaleX(0.5068);transform-origin:0 0;-webkit-text-stroke:0.25px #2a2a2a;-webkit-text-stroke:0.45px #2a2a2a;">1</div>
<div style="left:90.80px;top:207.17px;height:12px;line-height:12px;font-size:9.6px;font-weight:normal;font-style:normal;color:#2a2a2a;white-space:nowrap;transform:scaleX(0.5208);transform-origin:0 0;-webkit-text-stroke:0.25px #2a2a2a;-webkit-text-stroke:0.45px #2a2a2a;">,</div>
<div style="left:93.80px;top:207.17px;height:12px;line-height:12px;font-size:9.6px;font-weight:normal;font-style:normal;color:#2a2a2a;white-space:nowrap;transform:scaleX(0.5068);transform-origin:0 0;-webkit-text-stroke:0.25px #2a2a2a;-webkit-text-stroke:0.45px #2a2a2a;">1</div>
<div style="left:3px;top:226px;width:101px;height:2px;background:#56544c;"></div>
<div style="left:3px;top:228px;width:101px;height:1px;background:#faf9f2;"></div>
<svg style="position:absolute;left:9.0px;top:221.8px" width="5" height="10" viewBox="0 0 5 10"><path d="M0.5 0.5 H4.5 V6.5 L2.5 9.5 L0.5 6.5 Z" fill="#d8d8d4" stroke="#8c8c88" stroke-width="0.9"/></svg>
<div style="left:4.2px;top:238.0px;width:7px;height:7px;box-sizing:border-box;background:#fbfbf8;border-top:1.6px solid #5a5a5a;border-left:1.6px solid #5a5a5a;border-right:1px solid #e8e8e0;border-bottom:1px solid #e8e8e0;"></div>
<svg style="position:absolute;left:4.2px;top:238.0px" width="7" height="7" viewBox="0 0 8 8"><path d="M2 3.6 L3.5 5.4 L6.6 2" stroke="#000" stroke-width="1.4" fill="none"/></svg>
<div style="left:15.00px;top:235.80px;height:12px;line-height:12px;font-size:7.8px;font-weight:normal;font-style:normal;color:#1a1a1a;white-space:nowrap;transform:scaleX(0.7910);transform-origin:0 0;-webkit-text-stroke:0.25px #1a1a1a;">3 : 1</div>
<div style="left:77.5px;top:235.3px;width:28.299999999999997px;height:11.599999999999994px;background:#EEEDE6;box-sizing:border-box;border-top:1px solid #f8f8f4;border-left:1px solid #f8f8f4;border-right:1.4px solid #505050;border-bottom:1.4px solid #505050;"></div>
<div style="left:86.30px;top:234.97px;height:12px;line-height:12px;font-size:9.6px;font-weight:normal;font-style:normal;color:#2a2a2a;white-space:nowrap;transform:scaleX(0.5068);transform-origin:0 0;-webkit-text-stroke:0.25px #2a2a2a;-webkit-text-stroke:0.45px #2a2a2a;">1</div>
<div style="left:90.80px;top:234.97px;height:12px;line-height:12px;font-size:9.6px;font-weight:normal;font-style:normal;color:#2a2a2a;white-space:nowrap;transform:scaleX(0.5208);transform-origin:0 0;-webkit-text-stroke:0.25px #2a2a2a;-webkit-text-stroke:0.45px #2a2a2a;">,</div>
<div style="left:93.80px;top:234.97px;height:12px;line-height:12px;font-size:9.6px;font-weight:normal;font-style:normal;color:#2a2a2a;white-space:nowrap;transform:scaleX(0.5068);transform-origin:0 0;-webkit-text-stroke:0.25px #2a2a2a;-webkit-text-stroke:0.45px #2a2a2a;">1</div>
<div style="left:3px;top:254px;width:101px;height:2px;background:#56544c;"></div>
<div style="left:3px;top:256px;width:101px;height:1px;background:#faf9f2;"></div>
<svg style="position:absolute;left:9.0px;top:249.3px" width="5" height="10" viewBox="0 0 5 10"><path d="M0.5 0.5 H4.5 V6.5 L2.5 9.5 L0.5 6.5 Z" fill="#d8d8d4" stroke="#8c8c88" stroke-width="0.9"/></svg>
<div style="left:4.2px;top:265.3px;width:7px;height:7px;box-sizing:border-box;background:#fbfbf8;border-top:1.6px solid #5a5a5a;border-left:1.6px solid #5a5a5a;border-right:1px solid #e8e8e0;border-bottom:1px solid #e8e8e0;"></div>
<svg style="position:absolute;left:4.2px;top:265.3px" width="7" height="7" viewBox="0 0 8 8"><path d="M2 3.6 L3.5 5.4 L6.6 2" stroke="#000" stroke-width="1.4" fill="none"/></svg>
<div style="left:15.00px;top:263.10px;height:12px;line-height:12px;font-size:7.8px;font-weight:normal;font-style:normal;color:#1a1a1a;white-space:nowrap;transform:scaleX(0.7910);transform-origin:0 0;-webkit-text-stroke:0.25px #1a1a1a;">4 : 1</div>
<div style="left:77.5px;top:262.6px;width:28.299999999999997px;height:11.600000000000023px;background:#EEEDE6;box-sizing:border-box;border-top:1px solid #f8f8f4;border-left:1px solid #f8f8f4;border-right:1.4px solid #505050;border-bottom:1.4px solid #505050;"></div>
<div style="left:82.80px;top:262.57px;height:12px;line-height:12px;font-size:9.6px;font-weight:normal;font-style:normal;color:#2a2a2a;white-space:nowrap;transform:scaleX(0.9197);transform-origin:0 0;-webkit-text-stroke:0.25px #2a2a2a;-webkit-text-stroke:0.45px #2a2a2a;">50</div>
<div style="left:93.20px;top:262.57px;height:12px;line-height:12px;font-size:9.6px;font-weight:normal;font-style:normal;color:#2a2a2a;white-space:nowrap;transform:scaleX(0.5208);transform-origin:0 0;-webkit-text-stroke:0.25px #2a2a2a;-webkit-text-stroke:0.45px #2a2a2a;">,</div>
<div style="left:95.90px;top:262.57px;height:12px;line-height:12px;font-size:9.6px;font-weight:normal;font-style:normal;color:#2a2a2a;white-space:nowrap;transform:scaleX(0.8071);transform-origin:0 0;-webkit-text-stroke:0.25px #2a2a2a;-webkit-text-stroke:0.45px #2a2a2a;">9</div>
<div style="left:3px;top:282px;width:101px;height:2px;background:#56544c;"></div>
<div style="left:3px;top:284px;width:101px;height:1px;background:#faf9f2;"></div>
<svg style="position:absolute;left:55.0px;top:277.0px" width="5" height="10" viewBox="0 0 5 10"><path d="M0.5 0.5 H4.5 V6.5 L2.5 9.5 L0.5 6.5 Z" fill="#d8d8d4" stroke="#8c8c88" stroke-width="0.9"/></svg>
<div style="left:4.2px;top:292.7px;width:7px;height:7px;box-sizing:border-box;background:#fbfbf8;border-top:1.6px solid #5a5a5a;border-left:1.6px solid #5a5a5a;border-right:1px solid #e8e8e0;border-bottom:1px solid #e8e8e0;"></div>
<svg style="position:absolute;left:4.2px;top:292.7px" width="7" height="7" viewBox="0 0 8 8"><path d="M2 3.6 L3.5 5.4 L6.6 2" stroke="#000" stroke-width="1.4" fill="none"/></svg>
<div style="left:15.00px;top:290.50px;height:12px;line-height:12px;font-size:7.8px;font-weight:normal;font-style:normal;color:#1a1a1a;white-space:nowrap;transform:scaleX(0.7910);transform-origin:0 0;-webkit-text-stroke:0.25px #1a1a1a;">5 : 1</div>
<div style="left:77.5px;top:290px;width:28.299999999999997px;height:11.600000000000023px;background:#EEEDE6;box-sizing:border-box;border-top:1px solid #f8f8f4;border-left:1px solid #f8f8f4;border-right:1.4px solid #505050;border-bottom:1.4px solid #505050;"></div>
<div style="left:86.30px;top:289.67px;height:12px;line-height:12px;font-size:9.6px;font-weight:normal;font-style:normal;color:#2a2a2a;white-space:nowrap;transform:scaleX(0.5068);transform-origin:0 0;-webkit-text-stroke:0.25px #2a2a2a;-webkit-text-stroke:0.45px #2a2a2a;">1</div>
<div style="left:90.80px;top:289.67px;height:12px;line-height:12px;font-size:9.6px;font-weight:normal;font-style:normal;color:#2a2a2a;white-space:nowrap;transform:scaleX(0.5208);transform-origin:0 0;-webkit-text-stroke:0.25px #2a2a2a;-webkit-text-stroke:0.45px #2a2a2a;">,</div>
<div style="left:93.80px;top:289.67px;height:12px;line-height:12px;font-size:9.6px;font-weight:normal;font-style:normal;color:#2a2a2a;white-space:nowrap;transform:scaleX(0.5068);transform-origin:0 0;-webkit-text-stroke:0.25px #2a2a2a;-webkit-text-stroke:0.45px #2a2a2a;">1</div>
<div style="left:3px;top:309px;width:101px;height:2px;background:#56544c;"></div>
<div style="left:3px;top:311px;width:101px;height:1px;background:#faf9f2;"></div>
<svg style="position:absolute;left:9.0px;top:304.5px" width="5" height="10" viewBox="0 0 5 10"><path d="M0.5 0.5 H4.5 V6.5 L2.5 9.5 L0.5 6.5 Z" fill="#d8d8d4" stroke="#8c8c88" stroke-width="0.9"/></svg>
<div style="left:4.2px;top:320.0px;width:7px;height:7px;box-sizing:border-box;background:#fbfbf8;border-top:1.6px solid #5a5a5a;border-left:1.6px solid #5a5a5a;border-right:1px solid #e8e8e0;border-bottom:1px solid #e8e8e0;"></div>
<svg style="position:absolute;left:4.2px;top:320.0px" width="7" height="7" viewBox="0 0 8 8"><path d="M2 3.6 L3.5 5.4 L6.6 2" stroke="#000" stroke-width="1.4" fill="none"/></svg>
<div style="left:15.00px;top:317.80px;height:12px;line-height:12px;font-size:7.8px;font-weight:normal;font-style:normal;color:#1a1a1a;white-space:nowrap;transform:scaleX(0.7910);transform-origin:0 0;-webkit-text-stroke:0.25px #1a1a1a;">6 : 1</div>
<div style="left:77.5px;top:317.3px;width:28.299999999999997px;height:11.600000000000023px;background:#EEEDE6;box-sizing:border-box;border-top:1px solid #f8f8f4;border-left:1px solid #f8f8f4;border-right:1.4px solid #505050;border-bottom:1.4px solid #505050;"></div>
<div style="left:86.30px;top:316.97px;height:12px;line-height:12px;font-size:9.6px;font-weight:normal;font-style:normal;color:#2a2a2a;white-space:nowrap;transform:scaleX(0.5068);transform-origin:0 0;-webkit-text-stroke:0.25px #2a2a2a;-webkit-text-stroke:0.45px #2a2a2a;">1</div>
<div style="left:90.80px;top:316.97px;height:12px;line-height:12px;font-size:9.6px;font-weight:normal;font-style:normal;color:#2a2a2a;white-space:nowrap;transform:scaleX(0.5208);transform-origin:0 0;-webkit-text-stroke:0.25px #2a2a2a;-webkit-text-stroke:0.45px #2a2a2a;">,</div>
<div style="left:93.80px;top:316.97px;height:12px;line-height:12px;font-size:9.6px;font-weight:normal;font-style:normal;color:#2a2a2a;white-space:nowrap;transform:scaleX(0.5068);transform-origin:0 0;-webkit-text-stroke:0.25px #2a2a2a;-webkit-text-stroke:0.45px #2a2a2a;">1</div>
<div style="left:3px;top:337px;width:101px;height:2px;background:#56544c;"></div>
<div style="left:3px;top:339px;width:101px;height:1px;background:#faf9f2;"></div>
<svg style="position:absolute;left:9.0px;top:332.1px" width="5" height="10" viewBox="0 0 5 10"><path d="M0.5 0.5 H4.5 V6.5 L2.5 9.5 L0.5 6.5 Z" fill="#d8d8d4" stroke="#8c8c88" stroke-width="0.9"/></svg>
<div style="left:1px;top:276.2px;width:107px;height:13.5px;box-sizing:border-box;border-top:1px solid #a09e90;border-right:1px solid #c0bcac;border-bottom:1px dotted #909084;"></div>
<div style="left:7.2px;top:351px;width:41.3px;height:21.69999999999999px;background:#ECE9D8;box-sizing:border-box;border-top:1px solid #f8f8f2;border-left:1px solid #f8f8f2;border-right:2px solid #3c3c3c;border-bottom:2px solid #3c3c3c;"></div>
<div style="left:19.80px;top:351.10px;height:12px;line-height:12px;font-size:7.8px;font-weight:normal;font-style:normal;color:#1a1a1a;white-space:nowrap;transform:scaleX(0.8758);transform-origin:0 0;-webkit-text-stroke:0.25px #1a1a1a;">Load</div>
<div style="left:15.30px;top:360.05px;height:12px;line-height:12px;font-size:7.8px;font-weight:normal;font-style:normal;color:#1a1a1a;white-space:nowrap;transform:scaleX(0.8454);transform-origin:0 0;-webkit-text-stroke:0.25px #1a1a1a;">Scheme</div>
<div style="left:58.4px;top:351px;width:41.300000000000004px;height:21.69999999999999px;background:#ECE9D8;box-sizing:border-box;border-top:1px solid #f8f8f2;border-left:1px solid #f8f8f2;border-right:2px solid #3c3c3c;border-bottom:2px solid #3c3c3c;"></div>
<div style="left:71.00px;top:351.10px;height:12px;line-height:12px;font-size:7.8px;font-weight:normal;font-style:normal;color:#1a1a1a;white-space:nowrap;transform:scaleX(0.8575);transform-origin:0 0;-webkit-text-stroke:0.25px #1a1a1a;">Save</div>
<div style="left:66.50px;top:360.05px;height:12px;line-height:12px;font-size:7.8px;font-weight:normal;font-style:normal;color:#1a1a1a;white-space:nowrap;transform:scaleX(0.8454);transform-origin:0 0;-webkit-text-stroke:0.25px #1a1a1a;">Scheme</div>
<div style="left:2.2px;top:379px;width:105px;height:64px;box-sizing:border-box;border:1px solid #d0ccb8;border-radius:2px;"></div>
<div style="left:6px;top:376px;width:51px;height:5px;background:#ECE9D8;"></div>
<div style="left:7.20px;top:373.00px;height:12px;line-height:12px;font-size:7.8px;font-weight:normal;font-style:normal;color:#000;white-space:nowrap;transform:scaleX(0.8318);transform-origin:0 0;-webkit-text-stroke:0.25px #000;">L= R+G+B mixer</div>
<div style="left:8.5px;top:393px;width:85.5px;height:2px;background:#56544c;"></div>
<div style="left:8.5px;top:395px;width:85.5px;height:1px;background:#faf9f2;"></div>
<svg style="position:absolute;left:33.1px;top:388.3px" width="5" height="10" viewBox="0 0 5 10"><path d="M0.5 0.5 H4.5 V6.5 L2.5 9.5 L0.5 6.5 Z" fill="#d8d8d4" stroke="#8c8c88" stroke-width="0.9"/></svg>
<div style="left:98.50px;top:387.90px;height:12px;line-height:12px;font-size:7.8px;font-weight:normal;font-style:normal;color:#222;white-space:nowrap;transform:scaleX(0.8013);transform-origin:0 0;-webkit-text-stroke:0.25px #222;">R</div>
<div style="left:8.5px;top:408px;width:85.5px;height:2px;background:#56544c;"></div>
<div style="left:8.5px;top:410px;width:85.5px;height:1px;background:#faf9f2;"></div>
<svg style="position:absolute;left:56.5px;top:403.3px" width="5" height="10" viewBox="0 0 5 10"><path d="M0.5 0.5 H4.5 V6.5 L2.5 9.5 L0.5 6.5 Z" fill="#d8d8d4" stroke="#8c8c88" stroke-width="0.9"/></svg>
<div style="left:98.50px;top:402.90px;height:12px;line-height:12px;font-size:7.8px;font-weight:normal;font-style:normal;color:#222;white-space:nowrap;transform:scaleX(0.7396);transform-origin:0 0;-webkit-text-stroke:0.25px #222;">G</div>
<div style="left:8.5px;top:423px;width:85.5px;height:2px;background:#56544c;"></div>
<div style="left:8.5px;top:425px;width:85.5px;height:1px;background:#faf9f2;"></div>
<svg style="position:absolute;left:17.5px;top:418.5px" width="5" height="10" viewBox="0 0 5 10"><path d="M0.5 0.5 H4.5 V6.5 L2.5 9.5 L0.5 6.5 Z" fill="#d8d8d4" stroke="#8c8c88" stroke-width="0.9"/></svg>
<div style="left:98.50px;top:418.10px;height:12px;line-height:12px;font-size:7.8px;font-weight:normal;font-style:normal;color:#222;white-space:nowrap;transform:scaleX(0.8676);transform-origin:0 0;-webkit-text-stroke:0.25px #222;">B</div>
<div style="left:0px;top:447px;width:156.5px;height:12.5px;background:#d4e4f8;"></div>
<div style="left:1.6px;top:447.8px;width:6.3px;height:10.9px;background:#2a62d0;"></div>
<div style="left:9.73px;top:447.8px;width:6.3px;height:10.9px;background:#2a62d0;"></div>
<div style="left:17.86px;top:447.8px;width:6.3px;height:10.9px;background:#2a62d0;"></div>
<div style="left:25.99px;top:447.8px;width:6.3px;height:10.9px;background:#2a62d0;"></div>
<div style="left:34.12px;top:447.8px;width:6.3px;height:10.9px;background:#2a62d0;"></div>
<div style="left:42.25px;top:447.8px;width:6.3px;height:10.9px;background:#2a62d0;"></div>
<div style="left:50.38px;top:447.8px;width:6.3px;height:10.9px;background:#2a62d0;"></div>
<div style="left:58.51px;top:447.8px;width:6.3px;height:10.9px;background:#2a62d0;"></div>
<div style="left:66.64px;top:447.8px;width:6.3px;height:10.9px;background:#2a62d0;"></div>
<div style="left:74.77px;top:447.8px;width:6.3px;height:10.9px;background:#2a62d0;"></div>
<div style="left:82.9px;top:447.8px;width:6.3px;height:10.9px;background:#2a62d0;"></div>
<div style="left:91.03px;top:447.8px;width:6.3px;height:10.9px;background:#2a62d0;"></div>
<div style="left:99.16px;top:447.8px;width:6.3px;height:10.9px;background:#2a62d0;"></div>
<div style="left:107.29px;top:447.8px;width:6.3px;height:10.9px;background:#2a62d0;"></div>
<div style="left:115.42px;top:447.8px;width:6.3px;height:10.9px;background:#2a62d0;"></div>
<div style="left:123.55px;top:447.8px;width:6.3px;height:10.9px;background:#2a62d0;"></div>
<div style="left:131.68px;top:447.8px;width:6.3px;height:10.9px;background:#2a62d0;"></div>
<div style="left:139.81px;top:447.8px;width:6.3px;height:10.9px;background:#2a62d0;"></div>
<div style="left:147.94px;top:447.8px;width:6.3px;height:10.9px;background:#2a62d0;"></div>
<div style="left:157px;top:447px;width:125px;height:12px;box-sizing:border-box;border-top:1px solid #c4c0ac;border-left:1px solid #c4c0ac;"></div>
<div style="left:283px;top:447px;width:280.5px;height:12px;box-sizing:border-box;border-top:1px solid #c4c0ac;border-left:1px solid #c4c0ac;"></div>
<div style="left:564px;top:447px;width:63px;height:12px;box-sizing:border-box;border-top:1px solid #c4c0ac;border-left:1px solid #c4c0ac;"></div>
<div style="left:160.00px;top:446.80px;height:12px;line-height:12px;font-size:7.8px;font-weight:normal;font-style:normal;color:#1a1a1a;white-space:nowrap;transform:scaleX(0.8700);transform-origin:0 0;-webkit-text-stroke:0.25px #1a1a1a;">layer setting changed</div>
<div style="left:284.50px;top:446.80px;height:12px;line-height:12px;font-size:7.8px;font-weight:normal;font-style:normal;color:#1a1a1a;white-space:nowrap;transform:scaleX(0.8717);transform-origin:0 0;-webkit-text-stroke:0.25px #1a1a1a;">pixel x:473 y:310 stacksize: 340,0 R: 0,0 G: 0,0 B: 0,0</div>
<svg style="position:absolute;left:628px;top:447px" width="12" height="12"><path d="M11 3 L3 11 M11 7 L7 11" stroke="#a8a592" stroke-width="1"/></svg>
<div style="left:0px;top:459.6px;width:640px;height:1.4px;background:#f6f8fa;"></div>
<div style="left:0px;top:461px;width:640px;height:19px;background:linear-gradient(#5a88d8 0px,#3c7ae8 1px,#3a78ec 2px,#2458d8 4px,#2258da 10px,#2054d2 17px,#1c4cc0 19px);"></div>
<div style="left:0px;top:461px;width:64px;height:19px;border-radius:0 9px 9px 0;background:linear-gradient(#62c062 0px,#3c9c3c 3px,#36942f 12px,#2a7c2a 20px);"></div>
<svg style="position:absolute;left:7px;top:464px" width="11" height="12"><path d="M1 2 Q3 0.8 5 2 V5.2 Q3 4.2 1 5.2 Z" fill="#f05a28"/><path d="M5.8 2 Q8 3 10 2 V5.2 Q8 6.2 5.8 5.2 Z" fill="#7cbb00"/><path d="M1 6 Q3 5 5 6 V9.6 Q3 8.6 1 9.6 Z" fill="#00a1f1"/><path d="M5.8 6 Q8 7 10 6 V9.6 Q8 10.6 5.8 9.6 Z" fill="#ffbb00"/></svg>
<div style="left:21.20px;top:464.83px;height:12px;line-height:12px;font-size:10.6px;font-weight:bold;font-style:italic;color:#fff;white-space:nowrap;transform:scaleX(0.9832);transform-origin:0 0;;text-shadow:1px 1px 1px #1a4a1a;">Inicio</div>
<svg style="position:absolute;left:72px;top:464px" width="11" height="12"><circle cx="5.5" cy="6.2" r="3.6" fill="none" stroke="#5aa8f8" stroke-width="2"/><path d="M0.8 10 Q5 1 10.5 2.5" stroke="#f0b040" stroke-width="1.2" fill="none"/></svg>
<svg style="position:absolute;left:86px;top:464px" width="10" height="12"><rect x="0.5" y="1" width="9" height="10" rx="2" fill="#e0e8f4"/><circle cx="5" cy="6" r="2.8" fill="#4a80d0"/><circle cx="5" cy="6" r="1.2" fill="#e0e8f4"/></svg>
<div style="left:102.5px;top:462.5px;width:97.5px;height:16px;border-radius:3px;background:linear-gradient(#4a8cf8 0px,#3878ec 3px,#3270e4 15px,#2c66d8 19px);"></div>
<svg style="position:absolute;left:108.5px;top:465.5px" width="11" height="10"><path d="M0.5 1.5 h4 l1 1 h5 v7 h-10 z" fill="#e8c050"/><path d="M0.5 4 h10 v5.5 h-10 z" fill="#fbe080"/></svg>
<div style="left:121.00px;top:465.23px;height:12px;line-height:12px;font-size:8px;font-weight:normal;font-style:normal;color:#fff;white-space:nowrap;transform:scaleX(0.8434);transform-origin:0 0;;">Tutorial Registax 4</div>
<div style="left:202.5px;top:462.5px;width:97.5px;height:16px;border-radius:3px;background:linear-gradient(#4a8cf8 0px,#3878ec 3px,#3270e4 15px,#2c66d8 19px);"></div>
<div style="left:208.5px;top:465px;width:10px;height:11px;background:#142458;border:1px solid #6a8ac8;box-sizing:border-box;"></div>
<div style="left:210.00px;top:464.92px;height:12px;line-height:12px;font-size:6px;font-weight:bold;font-style:normal;color:#a0c8f8;white-space:nowrap;transform:scaleX(0.8844);transform-origin:0 0;-webkit-text-stroke:0.25px #a0c8f8;">Ps</div>
<div style="left:220.00px;top:465.23px;height:12px;line-height:12px;font-size:8px;font-weight:normal;font-style:normal;color:#fff;white-space:nowrap;transform:scaleX(0.8292);transform-origin:0 0;;">Adobe Photoshop CS3</div>
<div style="left:302.5px;top:462.5px;width:98.5px;height:16px;border-radius:3px;background:linear-gradient(#4a8cf8 0px,#3878ec 3px,#3270e4 15px,#2c66d8 19px);"></div>
<svg style="position:absolute;left:308.5px;top:465.5px" width="11" height="10"><path d="M0.5 1.5 h4 l1 1 h5 v7 h-10 z" fill="#e8c050"/><path d="M0.5 4 h10 v5.5 h-10 z" fill="#fbe080"/></svg>
<div style="left:321.00px;top:465.23px;height:12px;line-height:12px;font-size:8px;font-weight:normal;font-style:normal;color:#fff;white-space:nowrap;transform:scaleX(0.8438);transform-origin:0 0;;">Output</div>
<div style="left:402.5px;top:462.5px;width:99.0px;height:16px;border-radius:3px;background:linear-gradient(#1a44a8 0px,#1e4cb4 3px,#1e4cb4 18px);"></div>
<div style="left:409.5px;top:465px;width:11px;height:11px;background:linear-gradient(160deg,#8ae0b0,#3aa890 50%,#2a80b8);"></div>
<div style="left:421.00px;top:465.23px;height:12px;line-height:12px;font-size:8px;font-weight:normal;font-style:normal;color:#fff;white-space:nowrap;transform:scaleX(0.8318);transform-origin:0 0;;">RegiStax V4</div>
<div style="left:555.5px;top:461px;width:84.5px;height:19px;background:linear-gradient(#20a0f8 0px,#1090f0 3px,#0c88ec 15px,#0a7ce0 20px);"></div>
<div style="left:555px;top:461px;width:1px;height:19px;background:#0a58c8;"></div>
<svg style="position:absolute;left:562px;top:465px" width="11" height="11"><rect x="0.5" y="0.5" width="10" height="10.5" rx="1" fill="#e8f8f4"/><rect x="5.5" y="0.5" width="5" height="10.5" fill="#2a6a50"/><circle cx="5.5" cy="5.7" r="2.7" fill="none" stroke="#3aa890" stroke-width="1.5"/><path d="M5 4 L7 5.7 L5 7.4 Z" fill="#e8f8f4"/></svg>
<svg style="position:absolute;left:573px;top:465px" width="10" height="12"><circle cx="5" cy="5.5" r="4.2" fill="#203060"/><circle cx="5.5" cy="5.2" r="2.6" fill="#e0b060"/><circle cx="4.5" cy="4.5" r="1.6" fill="#f0e0c0"/><path d="M6 10 L9 11.5" stroke="#6ab0f0" stroke-width="1"/></svg>
<svg style="position:absolute;left:584px;top:465px" width="11" height="11"><rect x="0" y="0" width="11" height="11" fill="#a01818"/><circle cx="5.5" cy="5.5" r="4.3" fill="#f4e8e8"/><path d="M7.2 1 L3.2 6.2 H5.4 L4 10 L8 4.8 H5.8 Z" fill="#e01010"/></svg>
<div style="left:598.60px;top:465.23px;height:12px;line-height:12px;font-size:8px;font-weight:normal;font-style:normal;color:#fff;white-space:nowrap;transform:scaleX(0.8602);transform-origin:0 0;;">11:06 a.m.</div>
</body></html>
